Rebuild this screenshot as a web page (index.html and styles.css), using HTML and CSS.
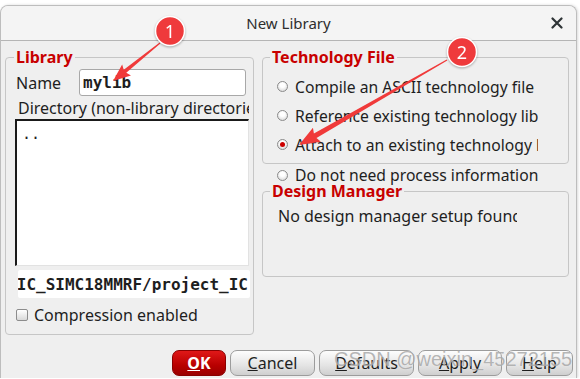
FILE: index.html
```html
<!DOCTYPE html>
<html lang="en">
<head>
<meta charset="UTF-8">
<title>New Library</title>
<link rel="stylesheet" href="styles.css">
</head>
<body>
    <div class="window">
        <div class="titlebar">
            <span></span>
            <span class="title">New Library</span>
            <span class="close">
                <svg width="12" height="12" viewBox="0 0 12 12"><path d="M1.5 1.5 L10.5 10.5 M10.5 1.5 L1.5 10.5" stroke="#2e3436" stroke-width="2.2" stroke-linecap="round"/></svg>
            </span>
        </div>

        <div class="content">
            <fieldset class="group library">
                <legend>Library</legend>
                <div class="name-row">
                    <span class="name-label">Name</span>
                    <div class="entry name-entry">mylib</div>
                </div>
                <div class="dir-label">Directory (non-library directories)</div>
                <div class="listbox"><span>..</span></div>
                <div class="path-entry"><span>/home/user/IC_SIMC18MMRF/project_IC</span></div>
                <div class="check-row">
                    <span class="checkbox"></span>
                    <span>Compression enabled</span>
                </div>
            </fieldset>

            <div class="right-col">
                <fieldset class="group tech">
                    <legend>Technology File</legend>
                    <div class="radio-row"><span class="radio"></span><span>Compile an ASCII technology file</span></div>
                    <div class="radio-row"><span class="radio"></span><span>Reference existing technology libraries</span></div>
                    <div class="radio-row"><span class="radio checked"></span><span>Attach to an existing technology library</span></div>
                </fieldset>
                <div class="radio-row loose"><span class="radio"></span><span>Do not need process information</span></div>
                <fieldset class="group dm">
                    <legend>Design Manager</legend>
                    <div class="dm-text">No design manager setup found</div>
                </fieldset>
            </div>
        </div>

        <div class="buttons">
            <button class="btn ok"><u>O</u>K</button>
            <button class="btn cancel"><u>C</u>ancel</button>
            <button class="btn defaults"><u>D</u>efaults</button>
            <button class="btn apply"><u>A</u>pply</button>
            <button class="btn help"><u>H</u>elp</button>
        </div>

        <div class="watermark">CSDN @weixin_45272155</div>
    </div>

    <svg class="notes" width="580" height="379" viewBox="0 0 580 379">
        <g fill="#f03a3a">
            <polygon transform="translate(160 43) rotate(141.04)" points="0,-0.6 45,-2 43,-7 60.4,0 43,7 45,2 0,0.6"/>
            <polygon transform="translate(447 60) rotate(150.13)" points="0,-0.6 152,-2.6 150,-8 170.7,0 150,8 152,2.6 0,0.6"/>
        </g>
        <g class="badge">
            <circle cx="170" cy="31" r="14.5" fill="#ef3a3c" stroke="#fff" stroke-width="1.5"/>
            <text x="170" y="37.5" text-anchor="middle">1</text>
        </g>
        <g class="badge">
            <circle cx="462" cy="52" r="14.5" fill="#ef3a3c" stroke="#fff" stroke-width="1.5"/>
            <text x="462" y="58.5" text-anchor="middle">2</text>
        </g>
    </svg>
</body>
</html>
```

FILE: styles.css
```css
/* Global styles */
body {
    margin: 0;
    background-color: #fff;
    font-family: "Noto Sans", sans-serif;
    font-size: 16px;
    color: #1e1e1e;
}
.window {
    position: relative;
    margin-top: 5px;
    width: 577px;
    height: 373px;
    box-sizing: border-box;
    border: 1px solid #bdbdbd;
    border-bottom: 0;
    border-radius: 8px 8px 0 0;
    background-color: #efefef;
    overflow: hidden;
    box-shadow: 1px 0 3px rgba(0, 0, 0, 0.15);
}
.titlebar {
    height: 34px;
    display: grid;
    grid-template-columns: 1fr auto 1fr;
    align-items: center;
    background-color: #f4f4f4;
    border-bottom: 1px solid #b5b5b5;
    font-size: 15px;
}
.title {
    color: #2e2e2e;
}
.close {
    justify-self: end;
    margin-right: 13px;
    display: flex;
}

.content {
    display: flex;
    gap: 8px;
    padding: 6px 0 0 4px;
}
.group {
    margin: 0;
    box-sizing: border-box;
    border: 1px solid #c6c6c6;
    border-radius: 4px;
    min-width: 0;
}
.group legend {
    padding: 0 2px;
    font-weight: bold;
    line-height: 20px;
    color: #c80000;
}

/* left side */
.library {
    width: 249px;
    height: 288px;
    padding: 2px 4px 0 9px;
}
.library legend {
    margin-left: -1px;
}
.name-row {
    display: flex;
    align-items: center;
    height: 27px;
}
.name-label {
    width: 63px;
    padding-left: 1px;
}
.entry {
    box-sizing: border-box;
    height: 27px;
    background-color: #fff;
    border: 1px solid #a8a8a8;
    border-radius: 3px;
    font-family: "DejaVu Sans Mono", monospace;
    font-weight: bold;
    font-size: 16px;
    line-height: 25px;
}
.name-entry {
    width: 167px;
    padding-left: 3px;
}
.dir-label {
    margin-top: 2px;
    padding-left: 3px;
    line-height: 21px;
    white-space: nowrap;
    overflow: hidden;
}
.listbox {
    box-sizing: border-box;
    height: 147px;
    background-color: #fff;
    border-top: 2px solid #1a1a1a;
    border-left: 2px solid #1a1a1a;
    border-right: 1px solid #e2e2e2;
    border-bottom: 1px solid #e2e2e2;
    padding: 3px 0 0 5px;
    font-family: "DejaVu Sans Mono", monospace;
    font-size: 15px;
    line-height: 20px;
}
.path-entry {
    margin: 4px 0 0 3px;
    width: 232px;
    height: 28px;
    display: flex;
    justify-content: flex-end;
    align-items: center;
    overflow: hidden;
    background-color: #fff;
    border-radius: 2px;
    font-family: "DejaVu Sans Mono", monospace;
    font-weight: bold;
    font-size: 16px;
    white-space: nowrap;
}
.path-entry span {
    padding-right: 2px;
}
.check-row {
    margin-top: 8px;
    height: 18px;
    display: flex;
    align-items: center;
    gap: 6px;
}
.checkbox {
    margin-left: 1px;
    width: 12px;
    height: 12px;
    box-sizing: border-box;
    border: 1px solid #8c8c8c;
    border-radius: 2px;
    background: linear-gradient(#ffffff, #d9d9d9);
}

/* right side */
.right-col {
    width: 307px;
    display: flex;
    flex-direction: column;
}
.tech {
    height: 117px;
    padding: 5px 0 0 14px;
}
.tech legend {
    margin-left: -7px;
}
.radio-row {
    width: 261px;
    height: 29px;
    display: flex;
    align-items: center;
    gap: 7px;
    font-size: 15.7px;
    white-space: nowrap;
    overflow: hidden;
}
.radio-row.loose {
    margin: 0 0 0 15px;
    height: 22px;
}
.radio {
    flex: none;
    width: 11px;
    height: 11px;
    box-sizing: border-box;
    border: 1px solid #8a8a8a;
    border-radius: 50%;
    background: radial-gradient(circle at 50% 35%, #ffffff 30%, #cfcfcf 100%);
    display: flex;
    align-items: center;
    justify-content: center;
}
.radio.checked::after {
    content: "";
    width: 5px;
    height: 5px;
    border-radius: 50%;
    background-color: #cc0000;
}
.dm {
    margin-top: -5px;
    height: 96px;
    padding: 5px 0 0 15px;
}
.dm legend {
    margin-left: -8px;
}
.dm-text {
    width: 239px;
    line-height: 20px;
    white-space: nowrap;
    overflow: hidden;
}

/* buttons */
.buttons {
    display: flex;
    justify-content: flex-end;
    gap: 4px;
    margin-top: 15px;
    padding-right: 3px;
}
.btn {
    height: 26px;
    padding: 0;
    border: 1px solid #9c9c9c;
    border-radius: 7px;
    background: linear-gradient(#fdfdfd, #e4e4e4 60%, #cfcfcf);
    font-family: "Noto Sans", sans-serif;
    font-size: 16px;
    color: #1e1e1e;
}
.btn.ok {
    width: 54px;
    border-color: #8a0000;
    background: linear-gradient(#e01818, #b80000 60%, #9a0000);
    color: #fff;
    font-weight: bold;
}
.btn.cancel { width: 85px; }
.btn.defaults { width: 95px; }
.btn.apply { width: 84px; }
.btn.help { width: 67px; }

.watermark {
    position: absolute;
    left: 333px;
    top: 342px;
    font-family: "Liberation Sans", sans-serif;
    font-size: 20px;
    color: rgba(110, 110, 110, 0.5);
    text-shadow: 0 0 1px rgba(255, 255, 255, 0.8);
    white-space: nowrap;
}

/* annotations on top of the dialog */
.notes {
    position: absolute;
    left: 0;
    top: 0;
    pointer-events: none;
}
.badge {
    filter: drop-shadow(0 1px 1px rgba(0, 0, 0, 0.3));
}
.badge text {
    fill: #fff;
    font-family: "Noto Sans", sans-serif;
    font-size: 18px;
}
```
